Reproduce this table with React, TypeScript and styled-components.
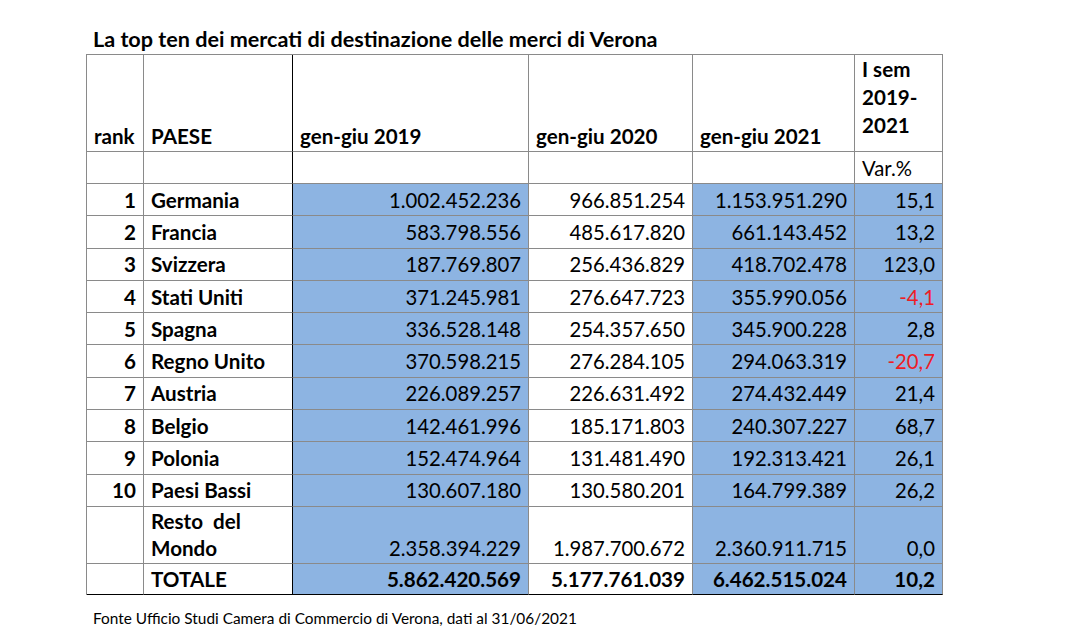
import React from "react";
import styled, { createGlobalStyle } from "styled-components";

const Global = createGlobalStyle`
  html, body { margin: 0; padding: 0; background: #fff; }
  body { font-family: "Lato", "Carlito", "Noto Sans", sans-serif; color: #000; }
`;

const GRAY = "#8a8a8a";
const BLUE = "#8db4e2";

const Page = styled.div`
  padding: 27px 0 0 86px;
`;

const Title = styled.div`
  font-size: 21.6px;
  font-weight: 700;
  line-height: 25px;
  margin: 0 0 2px 7px;
`;

const Table = styled.div`
  width: 857px;
  box-sizing: border-box;
  border-left: 1px solid ${GRAY};
  border-top: 1px solid ${GRAY};
`;

const Row = styled.div<{ $h: number }>`
  display: grid;
  grid-template-columns: 57px 149px 236px 164px 162px 88px;
  height: ${(p) => p.$h}px;
`;

const Cell = styled.div<{
  $right?: boolean;
  $bold?: boolean;
  $blue?: boolean;
  $red?: boolean;
  $v?: "center" | "end" | "start";
  $dark?: boolean;
  $lastRow?: boolean;
  $lh?: number;
  $pb?: number;
}>`
  box-sizing: border-box;
  display: flex;
  align-items: ${(p) => (p.$v === "end" ? "flex-end" : p.$v === "start" ? "flex-start" : "center")};
  justify-content: ${(p) => (p.$right ? "flex-end" : "flex-start")};
  text-align: ${(p) => (p.$right ? "right" : "left")};
  padding: 0 7px ${(p) => p.$pb ?? 0}px 7px;
  font-size: ${(p) => (p.$bold ? 20.6 : 20.3)}px;
  line-height: ${(p) => p.$lh ?? 24}px;
  font-weight: ${(p) => (p.$bold ? 700 : 400)};
  color: ${(p) => (p.$red ? "#ee1c25" : "#000")};
  background: ${(p) => (p.$blue ? BLUE : "#fff")};
  border-right: 1px solid ${(p) => (p.$dark ? "#000" : GRAY)};
  border-bottom: 1px solid ${(p) => (p.$lastRow ? "#000" : GRAY)};
  white-space: nowrap;
`;

const Footer = styled.div`
  font-size: 15.4px;
  line-height: 20px;
  margin: 13px 0 0 7px;
`;

type R = { rank: string; country: string; a: string; b: string; c: string; v: string };

const rows: R[] = [
  { rank: "1", country: "Germania", a: "1.002.452.236", b: "966.851.254", c: "1.153.951.290", v: "15,1" },
  { rank: "2", country: "Francia", a: "583.798.556", b: "485.617.820", c: "661.143.452", v: "13,2" },
  { rank: "3", country: "Svizzera", a: "187.769.807", b: "256.436.829", c: "418.702.478", v: "123,0" },
  { rank: "4", country: "Stati Uniti", a: "371.245.981", b: "276.647.723", c: "355.990.056", v: "-4,1" },
  { rank: "5", country: "Spagna", a: "336.528.148", b: "254.357.650", c: "345.900.228", v: "2,8" },
  { rank: "6", country: "Regno Unito", a: "370.598.215", b: "276.284.105", c: "294.063.319", v: "-20,7" },
  { rank: "7", country: "Austria", a: "226.089.257", b: "226.631.492", c: "274.432.449", v: "21,4" },
  { rank: "8", country: "Belgio", a: "142.461.996", b: "185.171.803", c: "240.307.227", v: "68,7" },
  { rank: "9", country: "Polonia", a: "152.474.964", b: "131.481.490", c: "192.313.421", v: "26,1" },
  { rank: "10", country: "Paesi Bassi", a: "130.607.180", b: "130.580.201", c: "164.799.389", v: "26,2" },
];

export default function App() {
  return (
    <>
      <Global />
      <Page>
        <Title>La top ten dei mercati di destinazione delle merci di Verona</Title>
        <Table>
          <Row $h={97}>
            <Cell $bold $v="end" $pb={3}>rank</Cell>
            <Cell $bold $v="end" $pb={3} $dark>PAESE</Cell>
            <Cell $bold $v="end" $pb={3}>gen-giu 2019</Cell>
            <Cell $bold $v="end" $pb={3}>gen-giu 2020</Cell>
            <Cell $bold $v="end" $pb={3}>gen-giu 2021</Cell>
            <Cell $bold $v="start" $lh={28}>
              I sem
              <br />
              2019-
              <br />
              2021
            </Cell>
          </Row>
          <Row $h={32}>
            <Cell />
            <Cell $dark />
            <Cell />
            <Cell />
            <Cell />
            <Cell>Var.%</Cell>
          </Row>
          {rows.map((r) => (
            <Row $h={32.3} key={r.rank}>
              <Cell $bold $right>{r.rank}</Cell>
              <Cell $bold $dark>{r.country}</Cell>
              <Cell $right $blue>{r.a}</Cell>
              <Cell $right>{r.b}</Cell>
              <Cell $right $blue>{r.c}</Cell>
              <Cell $right $blue $red={r.v.startsWith("-")}>{r.v}</Cell>
            </Row>
          ))}
          <Row $h={57}>
            <Cell />
            <Cell $bold $dark $v="end" $lh={27} $pb={1}>
              {"Resto\u00a0\u00a0del"}
              <br />
              Mondo
            </Cell>
            <Cell $right $blue $v="end" $lh={27} $pb={1}>2.358.394.229</Cell>
            <Cell $right $v="end" $lh={27} $pb={1}>1.987.700.672</Cell>
            <Cell $right $blue $v="end" $lh={27} $pb={1}>2.360.911.715</Cell>
            <Cell $right $blue $v="end" $lh={27} $pb={1}>0,0</Cell>
          </Row>
          <Row $h={31.5}>
            <Cell $lastRow />
            <Cell $bold $dark $lastRow>TOTALE</Cell>
            <Cell $bold $right $blue $lastRow>5.862.420.569</Cell>
            <Cell $bold $right $lastRow>5.177.761.039</Cell>
            <Cell $bold $right $blue $lastRow>6.462.515.024</Cell>
            <Cell $bold $right $blue $lastRow>10,2</Cell>
          </Row>
        </Table>
        <Footer>Fonte Ufficio Studi Camera di Commercio di Verona, dati al 31/06/2021</Footer>
      </Page>
    </>
  );
}
